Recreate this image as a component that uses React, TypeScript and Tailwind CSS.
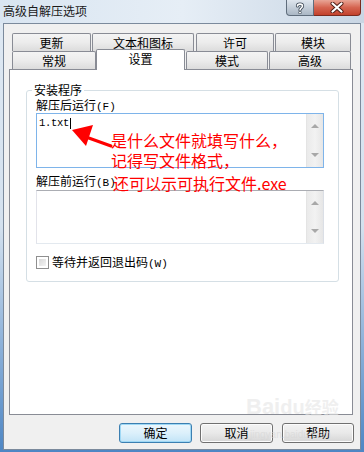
import React from "react";

const cjk = { fontFamily: '"Noto Sans CJK SC", "Noto Sans", sans-serif' };

function Tab({ label, w, ml, selected }: { label: string; w: number; ml: number; selected?: boolean }) {
  if (selected) {
    return (
      <div
        className="relative z-10 mb-[-1px] flex h-[21px] items-start justify-center rounded-t-[2px] border border-b-0 border-[#898c95] bg-white pt-[1px] text-[12px] leading-[16px] text-black"
        style={{ width: w, marginLeft: ml }}
      >
        {label}
      </div>
    );
  }
  return (
    <div
      className="flex h-[18px] items-center justify-center rounded-t-[2px] border border-b-0 border-[#898c95] bg-gradient-to-b from-[#f4f4f4] via-[#ececec] to-[#dcdcdc] text-[12px] leading-[16px] text-black"
      style={{ width: w, marginLeft: ml }}
    >
      {label}
    </div>
  );
}

function ScrollBar() {
  return (
    <div className="flex h-full w-[17px] flex-col items-center justify-between border-l border-[#e4e4e4] bg-gradient-to-r from-[#eaeaea] via-[#f2f2f2] to-[#e6e6e6] py-[9px]">
      <svg width="8" height="5" viewBox="0 0 8 5">
        <path d="M0 5 L4 1 L8 5 Z" fill="#a8a8a8" />
      </svg>
      <svg width="8" height="5" viewBox="0 0 8 5">
        <path d="M0 0 L4 4 L8 0 Z" fill="#a8a8a8" />
      </svg>
    </div>
  );
}

function Btn({ label, def, w }: { label: string; def?: boolean; w: number }) {
  return (
    <div
      className={`flex h-[20px] items-center justify-center rounded-[3px] border text-[12px] leading-[16px] text-black ${
        def
          ? "border-[#3c7fb1] bg-gradient-to-b from-[#ecf7fd] via-[#dcf0fb] to-[#c2e4f7] shadow-[inset_0_0_0_1px_#9fd8f5]"
          : "border-[#707070] bg-gradient-to-b from-[#f3f3f3] via-[#e9e9e9] to-[#d6d6d6] shadow-[inset_0_0_0_1px_#fcfcfc]"
      }`}
      style={{ width: w }}
    >
      {label}
    </div>
  );
}

const mono = { fontFamily: '"Liberation Mono", monospace' };

export default function App() {
  return (
    <div
      className="relative flex h-[452px] w-[364px] flex-col overflow-hidden bg-gradient-to-b from-[#dfe9f3] via-[#d4e1ee] to-[#4d86c4]"
      style={cjk}
    >
      {/* title bar */}
      <div className="flex h-[23px] w-full bg-gradient-to-r from-[#d9e5f1] via-[#e6eef6] to-[#c9d6e4]">
        <div className="pl-[3px] pt-[3px] text-[12px] leading-[16px] text-[#1a1a1a]">高级自解压选项</div>
        <div className="ml-auto flex h-[16px]">
          <div className="flex h-[16px] w-[28px] items-center justify-center rounded-bl-[4px] border border-t-0 border-[#5f6d7c] bg-gradient-to-b from-[#dfe6ee] via-[#c4ced9] to-[#aab7c5]">
            <svg width="10" height="12" viewBox="0 0 10 12">
              <path d="M2.5 4 C2.5 1.5 7.5 1.5 7.5 4 C7.5 6 5 6 5 8" fill="none" stroke="#3e4a57" strokeWidth="3.2" strokeLinecap="round" />
              <path d="M2.5 4 C2.5 1.5 7.5 1.5 7.5 4 C7.5 6 5 6 5 8" fill="none" stroke="#ffffff" strokeWidth="1.6" strokeLinecap="round" />
              <circle cx="5" cy="10.6" r="1.4" fill="#ffffff" stroke="#3e4a57" strokeWidth="0.8" />
            </svg>
          </div>
          <div className="mr-[3px] flex h-[16px] w-[47px] items-center justify-center rounded-br-[4px] border border-l-0 border-t-0 border-[#7a2a1e] bg-gradient-to-b from-[#e8a596] via-[#d56450] to-[#c2412b]">
            <svg width="14" height="11" viewBox="0 0 14 11">
              <path d="M2.5 1.5 L11.5 9.5 M11.5 1.5 L2.5 9.5" stroke="#4a1a12" strokeWidth="4" strokeLinecap="round" />
              <path d="M2.5 1.5 L11.5 9.5 M11.5 1.5 L2.5 9.5" stroke="#ffffff" strokeWidth="2.2" strokeLinecap="round" />
            </svg>
          </div>
        </div>
      </div>

      {/* client area */}
      <div className="ml-[3px] flex h-[427px] w-[358px] flex-col border border-[#7b8a9c] bg-[#f0f0f0]">
        <div className="pl-[5px] pt-[9px]">
          <div className="flex h-[18px]">
            <Tab label="更新" w={79} ml={3} />
            <Tab label="文本和图标" w={102} ml={1} />
            <Tab label="许可" w={78} ml={2} />
            <Tab label="模块" w={76} ml={1} />
          </div>
          <div className="flex h-[18px] items-end">
            <Tab label="常规" w={84} ml={3} />
            <Tab label="设置" w={89} ml={0} selected />
            <Tab label="模式" w={82} ml={1} />
            <Tab label="高级" w={82} ml={1} />
          </div>
          {/* panel */}
          <div className="h-[346px] w-[344px] border border-[#898c95] bg-white pl-[16px] pr-[13px] pt-[20px]">
            <div className="relative h-[192px] w-[313px] rounded-[3px] border border-[#d5dfe5] pl-[9px]">
              <div className="absolute left-[5px] top-[-9px] bg-white px-[2px] text-[12px] leading-[16px] text-black">安装程序</div>
              <div className="mt-[7px] h-[14px] text-[12px] leading-[14px] text-black">
                解压后运行<span className="text-[11px]" style={mono}>(F)</span>
              </div>
              <div className="mt-[1px] flex h-[55px] w-[288px] border border-[#7eb4ea] bg-white">
                <div className="flex flex-1 items-start pl-[2px] pt-[3px]">
                  <span className="text-[10.5px] leading-[12px] tracking-[-0.3px] text-black" style={mono}>1.txt</span>
                  <span className="ml-[1px] mt-[1px] h-[11px] w-[1px] bg-black" />
                </div>
                <ScrollBar />
              </div>
              <div className="mt-[6px] h-[14px] text-[12px] leading-[14px] text-black">
                解压前运行<span className="text-[11px]" style={mono}>(B)</span>
              </div>
              <div className="mt-[2px] flex h-[54px] w-[288px] border border-[#abadb3] border-b-[#e3e9ef] border-l-[#e2e3ea] border-r-[#dbdfe6] bg-white">
                <div className="flex-1" />
                <ScrollBar />
              </div>
              <div className="mt-[12px] flex h-[13px] items-center">
                <div className="h-[13px] w-[13px] border border-[#8f8f8f] bg-white p-[2px]">
                  <div className="h-full w-full bg-gradient-to-br from-[#d8d8d8] to-[#f4f4f4]" />
                </div>
                <div className="ml-[3px] text-[12px] leading-[14px] text-black">
                  等待并返回退出码<span className="text-[11px]" style={mono}>(W)</span>
                </div>
              </div>
            </div>
          </div>
        </div>
        <div className="mt-[8px] flex justify-end gap-[8px] pr-[6px]">
          <Btn label="确定" def w={73} />
          <Btn label="取消" w={73} />
          <div className="ml-[1px]">
            <Btn label="帮助" w={72} />
          </div>
        </div>
      </div>

      {/* watermark */}
      <div className="pointer-events-none absolute left-[246px] top-[395px] text-[22px] font-bold leading-[24px] text-[#e6e6e6] opacity-60" style={{ fontFamily: '"Liberation Sans", sans-serif' }}>
        Bai<span className="text-[20px]">du</span><span className="text-[17px]" style={cjk}>经验</span>
      </div>
      <div className="pointer-events-none absolute left-[250px] top-[429px] text-[10px] leading-[12px] text-[#d6d6d6] opacity-60" style={{ fontFamily: '"Liberation Sans", sans-serif' }}>
        jingyan.baidu.com
      </div>

      {/* red annotation */}
      <svg className="pointer-events-none absolute left-0 top-0" width="364" height="452" viewBox="0 0 364 452">
        <path d="M111 146 L86 137" stroke="#ff0000" strokeWidth="3" strokeLinecap="round" />
        <path d="M72 130 L93 125 L86 146 Z" fill="#ff0000" />
      </svg>
      <div className="pointer-events-none absolute left-[111px] top-[130px] text-[16px] leading-[20px] text-[#ff0000]">
        <div>是什么文件就填写什么，</div>
        <div>记得写文件格式，</div>
      </div>
      <div className="pointer-events-none absolute left-[113px] top-[173px] text-[16px] leading-[20px] text-[#ff0000]">
        还可以示可执行文件.exe
      </div>
    </div>
  );
}
